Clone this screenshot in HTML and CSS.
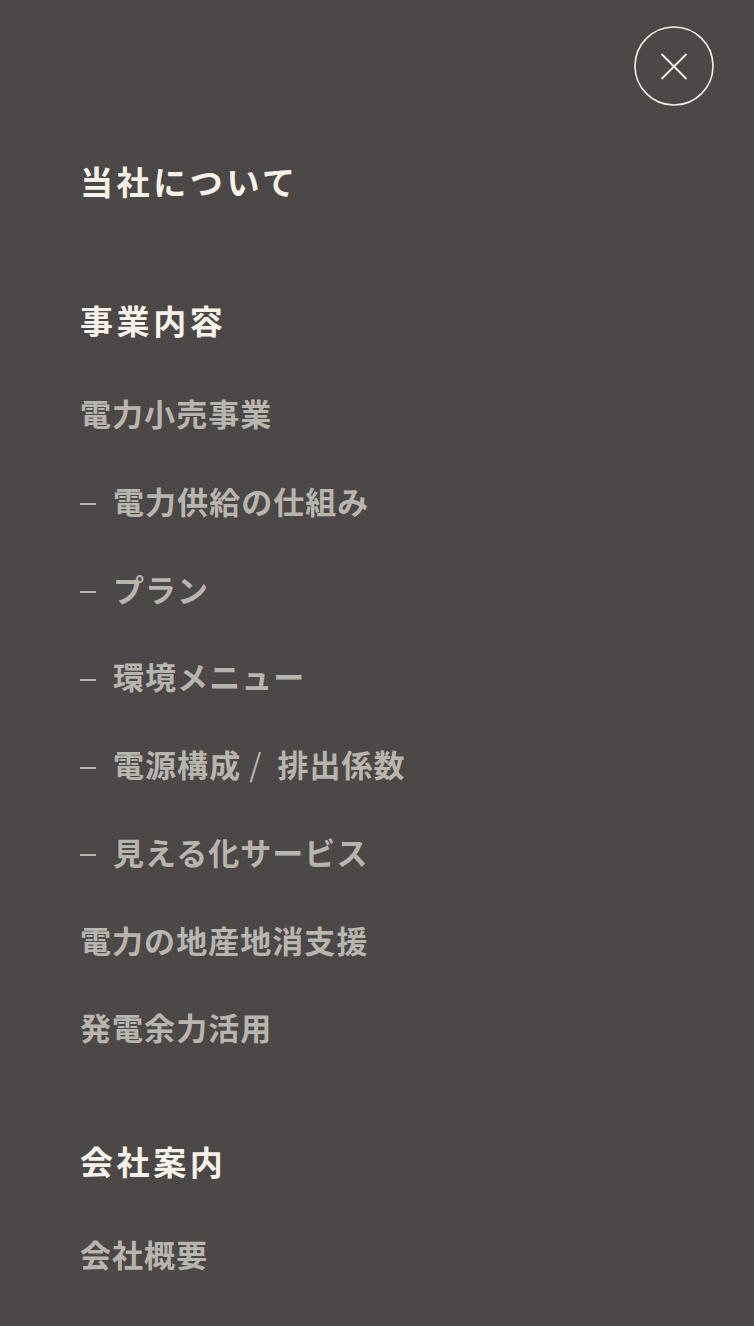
FILE: index.html
```html
<!DOCTYPE html>
<html lang="ja">
<head>
<meta charset="utf-8">
<title>Menu</title>
<link rel="stylesheet" href="styles.css">
</head>
<body>
<div class="menu">
  <header class="menu-header">
    <button class="close-btn" aria-label="閉じる">
      <svg width="80" height="80" viewBox="0 0 80 80">
        <circle cx="40" cy="40" r="39" fill="none" stroke="#f5f1e9" stroke-width="1.6"/>
        <line x1="27.5" y1="28" x2="52.5" y2="53" stroke="#f5f1e9" stroke-width="1.8"/>
        <line x1="52.5" y1="28" x2="27.5" y2="53" stroke="#f5f1e9" stroke-width="1.8"/>
      </svg>
    </button>
  </header>
  <nav class="nav">
    <section class="nav-section">
      <h2 class="nav-heading">当社について</h2>
    </section>
    <section class="nav-section">
      <h2 class="nav-heading">事業内容</h2>
      <ul class="nav-list">
        <li class="nav-item">電力小売事業</li>
        <li class="nav-item sub"><span class="dash"></span>電力供給の仕組み</li>
        <li class="nav-item sub"><span class="dash"></span>プラン</li>
        <li class="nav-item sub"><span class="dash"></span>環境メニュー</li>
        <li class="nav-item sub"><span class="dash"></span>電源構成<span class="slash">/</span>排出係数</li>
        <li class="nav-item sub"><span class="dash"></span>見える化サービス</li>
        <li class="nav-item">電力の地産地消支援</li>
        <li class="nav-item">発電余力活用</li>
      </ul>
    </section>
    <section class="nav-section">
      <h2 class="nav-heading">会社案内</h2>
      <ul class="nav-list">
        <li class="nav-item">会社概要</li>
      </ul>
    </section>
  </nav>
</div>
</body>
</html>
```

FILE: styles.css
```css
* { box-sizing: border-box; }
html, body {
  margin: 0;
  padding: 0;
  background: #4b4847;
}
body {
  font-family: "Noto Sans CJK JP", "Noto Sans", sans-serif;
  width: 754px;
  height: 1326px;
  overflow: hidden;
}
.menu {
  min-height: 1326px;
}
.menu-header {
  display: flex;
  justify-content: flex-end;
  padding: 26px 40px 0 0;
}
.close-btn {
  width: 80px;
  height: 80px;
  padding: 0;
  border: 0;
  background: transparent;
  display: block;
}
.close-btn svg { display: block; }
.nav {
  display: flex;
  flex-direction: column;
  gap: 67px;
  padding: 52px 0 0 80px;
}
.nav-section {
  display: flex;
  flex-direction: column;
}
.nav-heading {
  margin: 0 0 26px;
  font-size: 33px;
  line-height: 46px;
  height: 46px;
  font-weight: 700;
  letter-spacing: 3.6px;
  color: #f6f2ea;
}
.nav-list {
  list-style: none;
  margin: 0;
  padding: 0;
}
.nav-item {
  height: 87.75px;
  line-height: 87.75px;
  font-size: 31px;
  font-weight: 700;
  letter-spacing: 1.05px;
  color: #b8b4ae;
  white-space: nowrap;
}
.slash {
  display: inline-block;
  font-weight: 400;
  padding: 0 15px 0 8px;
}
.dash {
  display: inline-block;
  width: 16px;
  height: 2px;
  background: #b8b4ae;
  vertical-align: middle;
  margin-right: 17px;
  position: relative;
  top: -1px;
}
```
